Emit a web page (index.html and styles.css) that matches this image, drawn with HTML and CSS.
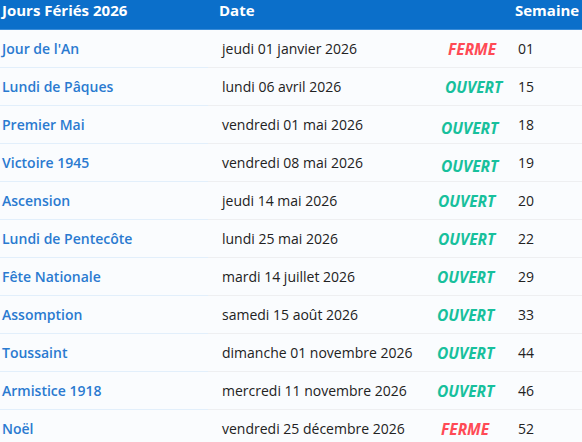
FILE: index.html
```html
<!DOCTYPE html>
<html lang="fr">
<head>
<meta charset="utf-8">
<title>Jours Fériés 2026</title>
<link rel="stylesheet" href="styles.css">
</head>
<body>
<div class="table">
  <div class="row head">
    <div class="c name">Jours Fériés 2026</div>
    <div class="c date">Date</div>
    <div class="c status"></div>
    <div class="c week">Semaine</div>
  </div>
  <div class="row">
    <div class="c name">Jour de l'An</div>
    <div class="c date">jeudi 01 janvier 2026</div>
    <div class="c status"><span class="tag ferme o11">FERME</span></div>
    <div class="c week">01</div>
  </div>
  <div class="row">
    <div class="c name">Lundi de Pâques</div>
    <div class="c date">lundi 06 avril 2026</div>
    <div class="c status"><span class="tag ouvert o8">OUVERT</span></div>
    <div class="c week">15</div>
  </div>
  <div class="row">
    <div class="c name">Premier Mai</div>
    <div class="c date">vendredi 01 mai 2026</div>
    <div class="c status"><span class="tag ouvert o4 low">OUVERT</span></div>
    <div class="c week">18</div>
  </div>
  <div class="row">
    <div class="c name">Victoire 1945</div>
    <div class="c date">vendredi 08 mai 2026</div>
    <div class="c status"><span class="tag ouvert o4 low">OUVERT</span></div>
    <div class="c week">19</div>
  </div>
  <div class="row">
    <div class="c name">Ascension</div>
    <div class="c date">jeudi 14 mai 2026</div>
    <div class="c status"><span class="tag ouvert o1">OUVERT</span></div>
    <div class="c week">20</div>
  </div>
  <div class="row">
    <div class="c name">Lundi de Pentecôte</div>
    <div class="c date">lundi 25 mai 2026</div>
    <div class="c status"><span class="tag ouvert o1">OUVERT</span></div>
    <div class="c week">22</div>
  </div>
  <div class="row">
    <div class="c name">Fête Nationale</div>
    <div class="c date">mardi 14 juillet 2026</div>
    <div class="c status"><span class="tag ouvert">OUVERT</span></div>
    <div class="c week">29</div>
  </div>
  <div class="row">
    <div class="c name">Assomption</div>
    <div class="c date">samedi 15 août 2026</div>
    <div class="c status"><span class="tag ouvert">OUVERT</span></div>
    <div class="c week">33</div>
  </div>
  <div class="row">
    <div class="c name">Toussaint</div>
    <div class="c date">dimanche 01 novembre 2026</div>
    <div class="c status"><span class="tag ouvert">OUVERT</span></div>
    <div class="c week">44</div>
  </div>
  <div class="row">
    <div class="c name">Armistice 1918</div>
    <div class="c date">mercredi 11 novembre 2026</div>
    <div class="c status"><span class="tag ouvert">OUVERT</span></div>
    <div class="c week">46</div>
  </div>
  <div class="row">
    <div class="c name">Noël</div>
    <div class="c date">vendredi 25 décembre 2026</div>
    <div class="c status"><span class="tag ferme o4">FERME</span></div>
    <div class="c week">52</div>
  </div>
</div>
</body>
</html>
```
FILE: styles.css
```css
html, body {
  margin: 0;
  padding: 0;
  background: #fafcfe;
  overflow: hidden;
}
body {
  font-family: "Open Sans", "Noto Sans", sans-serif;
  font-size: 14px;
  color: #222;
}
.table {
  width: 582px;
}
.row {
  display: grid;
  grid-template-columns: 208px 229px 73px 72px;
  height: 37px;
  border-bottom: 1px solid #eeeff1;
  align-items: center;
  background: #fafcfe;
}
.row .name {
  align-self: stretch;
  display: flex;
  align-items: center;
  padding-left: 2px;
  color: #2a7ad0;
  font-weight: 600;
  box-shadow: 0 1px 0 #e2effb;
}
.row .date {
  padding-left: 14px;
}
.row .week {
  padding-left: 8px;
}
.head {
  height: 29px;
  border-bottom: 1px solid #3a8cd8;
  background: #0b6fca;
  align-items: start;
  color: #fff;
  font-weight: 700;
  font-size: 15px;
}
.head .c {
  line-height: 21px;
}
.head .name {
  color: #fff;
  font-weight: 700;
  box-shadow: none;
  align-items: flex-start;
}
.head .date {
  padding-left: 11px;
}
.head .week {
  padding-left: 5px;
  white-space: nowrap;
}
.status {
  position: relative;
}
.tag {
  display: inline-block;
  font-weight: 700;
  font-style: italic;
  font-size: 15.5px;
  margin-left: 0;
}
.ferme { color: #ff4a55; }
.ouvert { color: #17c09c; }
.o11 { margin-left: 11px; }
.o8 { margin-left: 8px; }
.o4 { margin-left: 4px; }
.o1 { margin-left: 1px; }
.low { transform: translateY(3px); }
```
